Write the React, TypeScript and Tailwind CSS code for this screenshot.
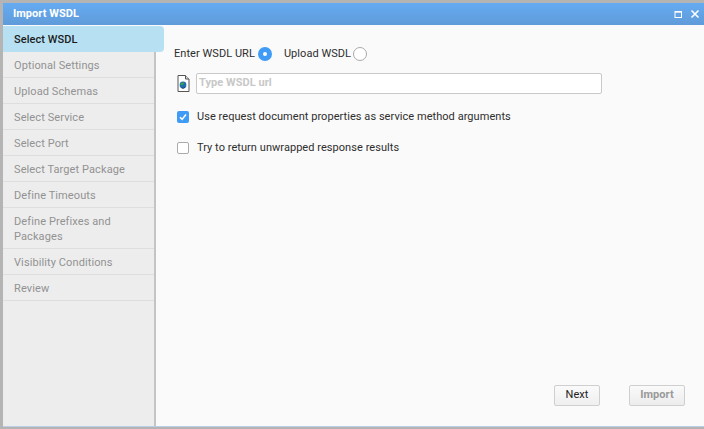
import React from "react";

const steps = [
  "Optional Settings",
  "Upload Schemas",
  "Select Service",
  "Select Port",
  "Select Target Package",
  "Define Timeouts",
  "Define Prefixes and Packages",
  "Visibility Conditions",
  "Review",
];

export default function App() {
  return (
    <div className="w-[704px] h-[429px] overflow-hidden bg-[#b4b4b4] pt-[3px] pb-[2px] pl-[3px] font-['Roboto',sans-serif] text-[11px] tracking-[0.05px] text-[#2e2e2e]">
      <div className="flex h-full flex-col border-b border-[#bccde4]">
        <div className="flex h-[22px] shrink-0 items-center justify-between bg-gradient-to-b from-[#66abf2] to-[#5f9bd9] pl-[10px] pr-[4px]">
          <span className="text-[11px] font-bold text-white">Import WSDL</span>
          <div className="flex items-center gap-[7px]">
            <svg width="9" height="9" viewBox="0 0 9 9" fill="none" stroke="white">
              <rect x="1" y="1.5" width="6.5" height="6" strokeWidth="1" />
              <path d="M1 2h6.5" strokeWidth="1.4" />
            </svg>
            <svg width="10" height="10" viewBox="0 0 10 10" fill="none" stroke="white" strokeWidth="1.6">
              <path d="M1.5 1.5l7 7M8.5 1.5l-7 7" />
            </svg>
          </div>
        </div>
        <div className="flex min-h-0 flex-1 bg-[#fafafa] pt-px">
          <aside className="w-[153px] shrink-0 border-r-2 border-[#c4c4c4] bg-[#ededed]">
            <div className="relative flex h-[26px] w-[161px] items-center rounded-r-[4px] bg-[#b7e1f3] pl-[11px] pt-[3px] font-medium text-[#1c1c1c]">
              Select WSDL
            </div>
            {steps.map((s) => (
              <div
                key={s}
                className="border-b border-[#dedede] pl-[11px] pr-[20px] pt-[6px] pb-[4px] leading-[15px] tracking-[0.1px] text-[#929292]"
              >
                {s}
              </div>
            ))}
          </aside>
          <main className="relative flex min-w-0 flex-1 flex-col pl-[18px] pr-[19px]">
            <div className="mt-[20px] flex h-[16px] items-center">
              <span>Enter WSDL URL</span>
              <span className="ml-[3px] flex h-[14px] w-[14px] items-center justify-center rounded-full bg-[#3f9bf6]">
                <span className="h-[4px] w-[4px] rounded-full bg-white" />
              </span>
              <span className="ml-[12px]">Upload WSDL</span>
              <span className="ml-[2px] h-[14px] w-[14px] rounded-full border border-[#aaaaaa] bg-white" />
            </div>
            <div className="mt-[11px] flex items-center">
              <svg width="13" height="17" viewBox="0 0 13 17" className="ml-[3px] shrink-0">
                <path d="M1 .5h7.5l3.5 3.5v12.5H1z" fill="#fff" stroke="#555" />
                <path d="M8.5.5V4H12" fill="#ddd" stroke="#555" />
                <circle cx="6" cy="10" r="3.4" fill="#1f6fb0" />
                <path d="M3 9.4c.8-1.8 3-2.2 3.9-1.4.3 1-.9 1.8-1.7 2-.8.2-1.6 0-2.2-.6z" fill="#3aa34a" />
                <path d="M3.8 12.3c1.4 1 3.5.6 4.6-.9-.7 2.5-3.3 2.9-4.6.9z" fill="#12324f" />
              </svg>
              <div className="ml-[6px] flex h-[21px] w-[406px] items-center rounded-[2px] border border-[#c9c9c9] bg-white pl-[2px] font-bold text-[#c8c8c8]">
                Type WSDL url
              </div>
            </div>
            <div className="mt-[16px] flex h-[14px] items-center">
              <span className="ml-[3px] flex h-[12px] w-[12px] items-center justify-center rounded-[2px] bg-[#3f9bf6]">
                <svg width="10" height="10" viewBox="0 0 10 10" fill="none" stroke="white" strokeWidth="1.6">
                  <path d="M2 5.2l2.1 2.2L8 2.6" />
                </svg>
              </span>
              <span className="ml-[8px]">Use request document properties as service method arguments</span>
            </div>
            <div className="mt-[17px] flex h-[14px] items-center">
              <span className="ml-[3px] h-[12px] w-[12px] rounded-[2px] border border-[#aaaaaa] bg-white" />
              <span className="ml-[8px]">Try to return unwrapped response results</span>
            </div>
            <div className="mt-auto mb-[20px] flex justify-end">
              <div className="flex h-[21px] w-[46px] items-center justify-center rounded-[2px] border border-[#cfcfcf] bg-gradient-to-b from-[#fafafa] to-[#efefef] text-[#222]">
                Next
              </div>
              <div className="ml-[29px] flex h-[21px] w-[56px] items-center justify-center rounded-[2px] border border-[#cfcfcf] bg-gradient-to-b from-[#fafafa] to-[#ececec] font-bold text-[#999]">
                Import
              </div>
            </div>
          </main>
        </div>
      </div>
    </div>
  );
}
